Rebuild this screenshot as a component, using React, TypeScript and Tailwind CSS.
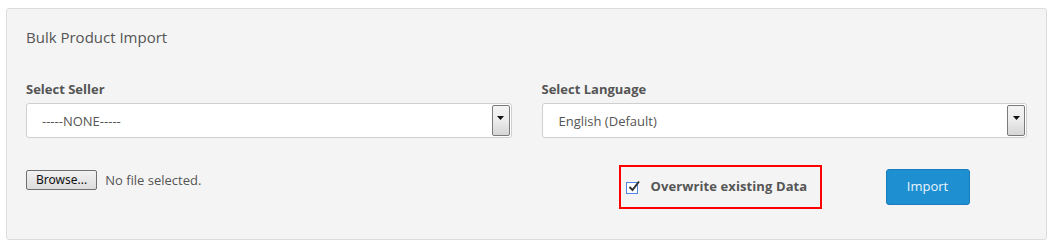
import React from "react";

function Arrow() {
  return (
    <div className="absolute right-[1px] top-[1px] bottom-[1px] w-[18px] rounded-[2px] border border-[#7a7a7a] bg-gradient-to-b from-[#f4f4f4] via-[#ececec] to-[#d6d6d6] flex items-center justify-center pb-[6px]">
      <svg width="7" height="4" viewBox="0 0 7 4">
        <polygon points="0,0 7,0 3.5,4" fill="#111" />
      </svg>
    </div>
  );
}

function Select({ label, value, textPad }: { label: string; value: string; textPad: string }) {
  return (
    <div className="flex flex-col">
      <div className="text-[13px] font-bold text-[#555] leading-[18px] mb-[5px]">{label}</div>
      <div className="relative h-[35px] rounded-[3px] border border-[#cfcfcf] bg-white">
        <div className={`h-full flex items-center pt-[2px] text-[13px] text-[#555] ${textPad}`}>{value}</div>
        <Arrow />
      </div>
    </div>
  );
}

export default function App() {
  return (
    <div className="w-[1057px] h-[246px] bg-white pt-[8px] pl-[6px]" style={{ fontFamily: '"Open Sans", sans-serif' }}>
      <div className="w-[1041px] h-[232px] rounded-[3px] border border-[#dcdcdc] bg-[#f4f4f4] pl-[19px] pr-[19px] pt-[18px]">
        <div className="text-[15px] leading-[20px] text-[#555]">Bulk Product Import</div>
        <div className="mt-[33px] grid grid-cols-2 gap-[30px]">
          <Select label="Select Seller" value="-----NONE-----" textPad="pl-[15px]" />
          <Select label="Select Language" value="English (Default)" textPad="pl-[16px]" />
        </div>
        <div className="mt-[27px] grid grid-cols-2 gap-[30px]">
          <div className="flex items-start pt-[5px]">
            <button className="h-[20px] px-[9px] rounded-[2px] border border-[#707070] bg-gradient-to-b from-[#f2f2f2] to-[#dcdcdc] text-[12px] leading-[16px] text-[#111]" style={{ fontFamily: '"Noto Sans", sans-serif' }}>
              Browse...
            </button>
            <span className="ml-[8px] text-[13px] leading-[20px] text-[#555]">No file selected.</span>
          </div>
          <div className="flex items-start pl-[77px]">
            <div className="w-[203px] h-[44px] border-2 border-[#ff0000] flex items-center pl-[5px]">
              <div className="relative w-[12px] h-[12px] border border-[#4f86e6] bg-white mt-[1px]">
                <svg className="absolute -top-[3px] left-[1px]" width="12" height="12" viewBox="0 0 12 12">
                  <path d="M1.5 7 L4.5 10 L11 1.5" stroke="#333" strokeWidth="2" fill="none" />
                </svg>
              </div>
              <span className="ml-[13px] text-[13px] font-bold text-[#555] tracking-[0.1px]">Overwrite existing Data</span>
            </div>
            <button className="ml-[64px] mt-[4px] w-[84px] h-[36px] rounded-[3px] border border-[#1a7cbd] bg-[#1e90d2] text-[13px] text-[#eaf4fb]">
              Import
            </button>
          </div>
        </div>
      </div>
    </div>
  );
}
